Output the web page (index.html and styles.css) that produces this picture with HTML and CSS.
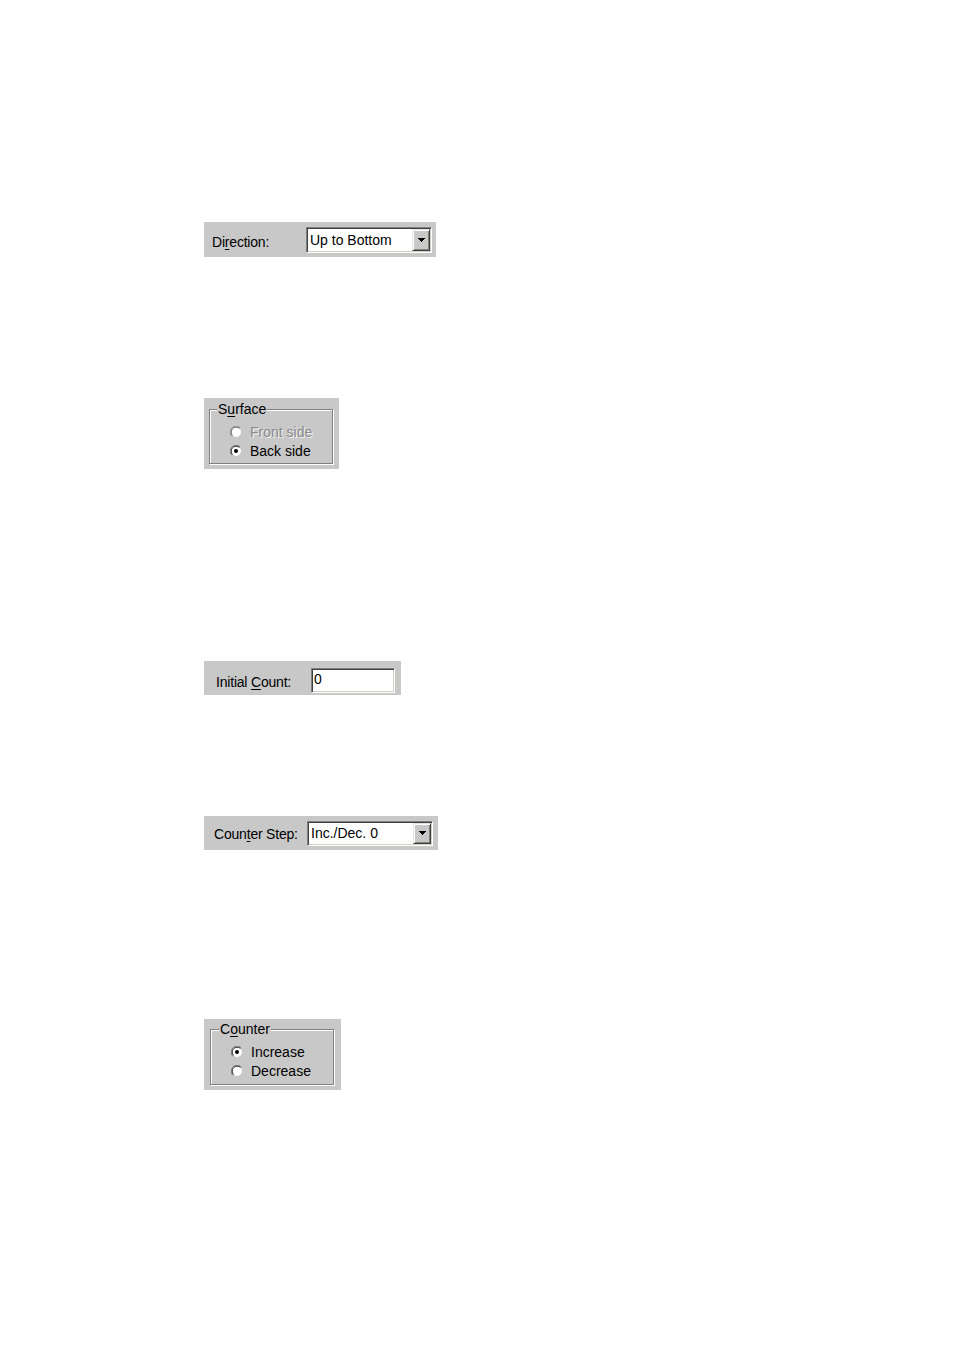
FILE: index.html
```html
<!DOCTYPE html>
<html>
<head>
<meta charset="utf-8">
<link rel="stylesheet" href="styles.css">
</head>
<body>
<div class="page">

  <div class="panel row p-direction">
    <span class="label l-direction">Di<u>r</u>ection:</span>
    <div class="combo">
      <span class="value">Up to Bottom</span>
      <span class="btn"><svg width="7" height="4" viewBox="0 0 7 4" shape-rendering="crispEdges"><path d="M0 0H7V1H0ZM1 1H6V2H1ZM2 2H5V3H2ZM3 3H4V4H3Z" fill="#000"/></svg></span>
    </div>
  </div>

  <div class="panel p-surface">
    <div class="group">
      <span class="legend">S<u>u</u>rface</span>
      <div class="opt disabled">
        <svg class="radio" width="12" height="12" viewBox="0 0 12 12">
          <circle cx="6" cy="6" r="5" fill="#fff"/>
          <path d="M1.76 10.24A6 6 0 0 1 10.24 1.76" fill="none" stroke="#8c8c8c" stroke-width="1"/>
          <path d="M2.47 9.53A5 5 0 0 1 9.53 2.47" fill="none" stroke="#6e6e6e" stroke-width="1"/>
        </svg>
        <span class="text">Front side</span>
      </div>
      <div class="opt">
        <svg class="radio" width="12" height="12" viewBox="0 0 12 12">
          <circle cx="6" cy="6" r="5" fill="#fff"/>
          <path d="M1.76 10.24A6 6 0 0 1 10.24 1.76" fill="none" stroke="#808080" stroke-width="1"/>
          <path d="M2.47 9.53A5 5 0 0 1 9.53 2.47" fill="none" stroke="#303030" stroke-width="1"/>
          <circle cx="6" cy="6" r="2" fill="#000"/>
        </svg>
        <span class="text">Back side</span>
      </div>
    </div>
  </div>

  <div class="panel row p-initial">
    <span class="label l-initial">Initial <u>C</u>ount:</span>
    <div class="textbox">0</div>
  </div>

  <div class="panel row p-step">
    <span class="label l-step">Coun<u>t</u>er Step:</span>
    <div class="combo combo-step">
      <span class="value">Inc./Dec. 0</span>
      <span class="btn"><svg width="7" height="4" viewBox="0 0 7 4" shape-rendering="crispEdges"><path d="M0 0H7V1H0ZM1 1H6V2H1ZM2 2H5V3H2ZM3 3H4V4H3Z" fill="#000"/></svg></span>
    </div>
  </div>

  <div class="panel p-counter">
    <div class="group">
      <span class="legend">C<u>o</u>unter</span>
      <div class="opt">
        <svg class="radio" width="12" height="12" viewBox="0 0 12 12">
          <circle cx="6" cy="6" r="5" fill="#fff"/>
          <path d="M1.76 10.24A6 6 0 0 1 10.24 1.76" fill="none" stroke="#808080" stroke-width="1"/>
          <path d="M2.47 9.53A5 5 0 0 1 9.53 2.47" fill="none" stroke="#303030" stroke-width="1"/>
          <circle cx="6" cy="6" r="2" fill="#000"/>
        </svg>
        <span class="text">Increase</span>
      </div>
      <div class="opt">
        <svg class="radio" width="12" height="12" viewBox="0 0 12 12">
          <circle cx="6" cy="6" r="5" fill="#fff"/>
          <path d="M1.76 10.24A6 6 0 0 1 10.24 1.76" fill="none" stroke="#808080" stroke-width="1"/>
          <path d="M2.47 9.53A5 5 0 0 1 9.53 2.47" fill="none" stroke="#303030" stroke-width="1"/>
        </svg>
        <span class="text">Decrease</span>
      </div>
    </div>
  </div>

</div>
</body>
</html>
```

FILE: styles.css
```css
html, body {
  margin: 0;
  padding: 0;
  background: #fff;
}

.page {
  padding: 222px 0 0 204px;
  display: flex;
  flex-direction: column;
  align-items: flex-start;
}

.panel {
  background: #c8c8c8;
  box-sizing: border-box;
  font-family: "Liberation Sans", Arial, sans-serif;
  font-size: 14px;
  color: #000;
}

.row {
  display: flex;
  align-items: center;
}

.label {
  flex: none;
  white-space: nowrap;
  letter-spacing: -0.2px;
  line-height: 16px;
}

u {
  text-decoration-thickness: 1px;
  text-underline-offset: 2px;
}

/* Direction */
.p-direction {
  width: 232px;
  height: 35px;
  padding-left: 8px;
}
.l-direction {
  width: 94px;
  padding-top: 4px;
}

/* Combo box */
.combo {
  width: 126px;
  height: 26px;
  box-sizing: border-box;
  padding: 1px;
  background: #fff;
  border: 1px solid;
  border-color: #808080 #fff #fff #808080;
  box-shadow: inset 1px 1px #404040, inset -1px -1px #d4d0c8;
  display: flex;
  align-items: center;
}
.combo .value {
  flex: 1;
  padding-left: 2px;
  white-space: nowrap;
  line-height: 16px;
}
.btn {
  width: 18px;
  height: 22px;
  box-sizing: border-box;
  background: #c8c8c8;
  border: 1px solid;
  border-color: #e4e4e4 #404040 #404040 #e4e4e4;
  box-shadow: inset 1px 1px #fff, inset -1px -1px #808080;
  display: flex;
  align-items: center;
  justify-content: center;
}
.btn svg { display: block; }

/* Group boxes */
.group {
  position: relative;
  box-sizing: border-box;
  width: 124px;
  border: 1px solid #808080;
  box-shadow: inset 1px 1px #fff, 1px 1px #fff;
  padding: 12px 0 0 20px;
}
.legend {
  position: absolute;
  top: -9px;
  left: 7px;
  padding: 0 1px;
  line-height: 16px;
  background: #c8c8c8;
  white-space: nowrap;
}
.opt {
  height: 19px;
  display: flex;
  align-items: center;
  gap: 8px;
  white-space: nowrap;
}
.radio {
  display: block;
  flex: none;
}
.opt.disabled .text {
  color: #8a8a8a;
  text-shadow: 1px 1px #f4f4f4;
}

.p-surface {
  width: 135px;
  height: 71px;
  padding: 11px 0 0 5px;
  margin-top: 141px;
}
.p-surface .group { height: 55px; }

.p-counter {
  width: 137px;
  height: 71px;
  padding: 10px 0 0 6px;
  margin-top: 169px;
}
.p-counter .group { height: 56px; }
.p-counter .legend { left: 8px; }

/* Initial count */
.p-initial {
  width: 197px;
  height: 34px;
  padding: 7px 0 0 12px;
  margin-top: 192px;
  align-items: flex-start;
}
.l-initial {
  width: 95px;
  margin-top: 6px;
}
.textbox {
  width: 84px;
  height: 25px;
  box-sizing: border-box;
  background: #fff;
  border: 1px solid;
  border-color: #808080 #fff #fff #808080;
  box-shadow: inset 1px 1px #404040, inset -1px -1px #d4d0c8;
  padding: 2px 0 0 2px;
  line-height: 16px;
}

/* Counter step */
.p-step {
  width: 234px;
  height: 34px;
  padding-left: 10px;
  margin-top: 121px;
}
.l-step {
  width: 93px;
  padding-top: 2px;
}
.combo-step { height: 25px; }
.combo-step .btn { height: 21px; }
```
